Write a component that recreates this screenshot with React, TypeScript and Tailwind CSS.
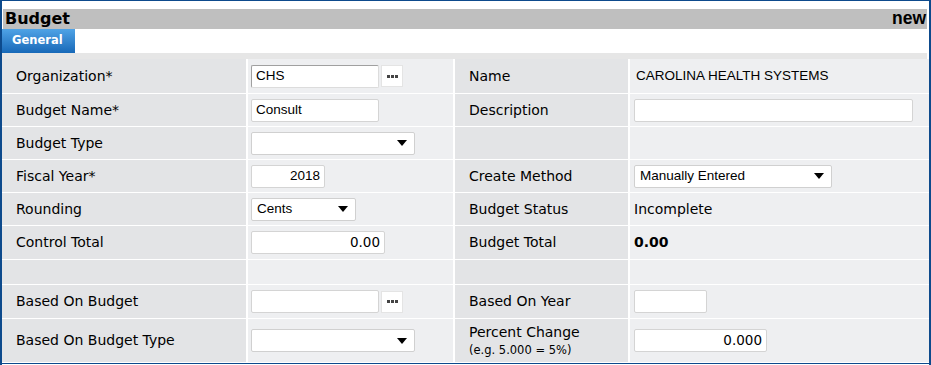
import React from 'react';

const verdana = { fontFamily: '"DejaVu Sans", Verdana, sans-serif' };
const arial = { fontFamily: '"Liberation Sans", Arial, sans-serif' };

const Dots = () => (
  <div className="ml-[2px] w-[22px] h-[22px] bg-white border border-[#e4e4e4] flex items-center justify-center gap-[1px]">
    <span className="w-[3px] h-[3px] bg-[#444]" />
    <span className="w-[3px] h-[3px] bg-[#444]" />
    <span className="w-[3px] h-[3px] bg-[#444]" />
  </div>
);

interface InputProps {
  width: string;
  value?: string;
  right?: boolean;
  font?: React.CSSProperties;
  dark?: boolean;
}

const TextBox: React.FC<InputProps> = ({ width, value = '', right, font = arial, dark }) => (
  <div
    className={`${width} h-[23px] bg-white rounded-[2px] border px-[4px] flex items-center text-[13.5px] text-black ${
      right ? 'justify-end' : ''
    } ${dark ? 'border-[#a0a0a0] border-b-[#dcdcdc] border-r-[#dcdcdc]' : 'border-[#d4d4d4]'}`}
    style={font}
  >
    {value}
  </div>
);

const SelectBox: React.FC<{ width: string; value?: string }> = ({ width, value = '' }) => (
  <div
    className={`${width} h-[23px] bg-white rounded-[2px] border border-[#d0d0d0] pl-[5px] pr-[7px] flex items-center justify-between text-[13.5px] text-black`}
    style={arial}
  >
    <span>{value}</span>
    <svg width="10" height="6" viewBox="0 0 10 6">
      <path d="M0 0 H10 L5 6 Z" fill="#000" />
    </svg>
  </div>
);

const Label: React.FC<{ children?: React.ReactNode }> = ({ children }) => (
  <div className="bg-[#e3e4e6] flex items-center pl-[14px] text-[14px] text-black" style={verdana}>
    {children}
  </div>
);

const Value: React.FC<{ children?: React.ReactNode; pl?: string }> = ({ children, pl = 'pl-[3px]' }) => (
  <div className={`bg-[#eeeff1] flex items-center ${pl}`}>{children}</div>
);

export default function App() {
  return (
    <div className="w-[931px] h-[365px] bg-white border-l-2 border-r-2 border-t border-[#0d4a8c] relative overflow-hidden">
      <div className="h-[8px]" />
      <div className="ml-[1px] mr-[2px] h-[20px] bg-[#bfbfbf] flex items-center justify-between pl-[2px] pr-[1px]">
        <span className="text-[16px] font-bold text-black leading-none" style={verdana}>Budget</span>
        <span className="text-[17.5px] font-bold text-black leading-none" style={arial}>new</span>
      </div>
      <div className="h-[24px] flex">
        <div
          className="w-[73px] bg-gradient-to-b from-[#4fa3e6] to-[#1769b8] text-white text-[11.5px] font-bold flex items-center pl-[10px]"
          style={verdana}
        >
          General
        </div>
      </div>
      <div className="h-[6px] bg-[#e6e6e6] mr-[2px]" />
      <div
        className="grid grid-cols-[244px_205px_173px_299px] gap-x-[2px] gap-y-[1px] bg-white"
        style={{ gridTemplateRows: '34px 32px 32px 32px 32px 33px 24px 33px 43px' }}
      >
        <Label>Organization*</Label>
        <Value>
          <TextBox width="w-[128px]" value="CHS" dark />
          <Dots />
        </Value>
        <Label>Name</Label>
        <Value pl="pl-[6px]">
          <span className="text-[13.5px] text-black" style={arial}>CAROLINA HEALTH SYSTEMS</span>
        </Value>

        <Label>Budget Name*</Label>
        <Value>
          <TextBox width="w-[128px]" value="Consult" />
        </Value>
        <Label>Description</Label>
        <Value pl="pl-[4px]">
          <TextBox width="w-[279px]" />
        </Value>

        <Label>Budget Type</Label>
        <Value>
          <SelectBox width="w-[164px]" />
        </Value>
        <Label />
        <Value />

        <Label>Fiscal Year*</Label>
        <Value>
          <TextBox width="w-[74px]" value="2018" right />
        </Value>
        <Label>Create Method</Label>
        <Value pl="pl-[4px]">
          <SelectBox width="w-[198px]" value="Manually Entered" />
        </Value>

        <Label>Rounding</Label>
        <Value>
          <SelectBox width="w-[105px]" value="Cents" />
        </Value>
        <Label>Budget Status</Label>
        <Value pl="pl-[4px]">
          <span className="text-[14px] text-black" style={verdana}>Incomplete</span>
        </Value>

        <Label>Control Total</Label>
        <Value>
          <TextBox width="w-[134px]" value="0.00" right font={verdana} />
        </Value>
        <Label>Budget Total</Label>
        <Value pl="pl-[4px]">
          <span className="text-[14px] font-bold text-black" style={verdana}>0.00</span>
        </Value>

        <Label />
        <Value />
        <Label />
        <Value />

        <Label>Based On Budget</Label>
        <Value>
          <TextBox width="w-[128px]" />
          <Dots />
        </Value>
        <Label>Based On Year</Label>
        <Value pl="pl-[4px]">
          <TextBox width="w-[73px]" />
        </Value>

        <Label>Based On Budget Type</Label>
        <Value>
          <SelectBox width="w-[164px]" />
        </Value>
        <Label>
          <div className="flex flex-col leading-tight">
            <span>Percent Change</span>
            <span className="text-[11.5px] mt-[1px]">(e.g. 5.000 = 5%)</span>
          </div>
        </Label>
        <Value pl="pl-[4px]">
          <TextBox width="w-[133px]" value="0.000" right font={verdana} />
        </Value>
      </div>
      <div className="absolute left-0 right-0 top-[362px] h-[1px] bg-[#0d4a8c]" />
      <div className="absolute left-0 right-0 top-[364px] h-[1px] bg-[#0d4a8c]" />
    </div>
  );
}
